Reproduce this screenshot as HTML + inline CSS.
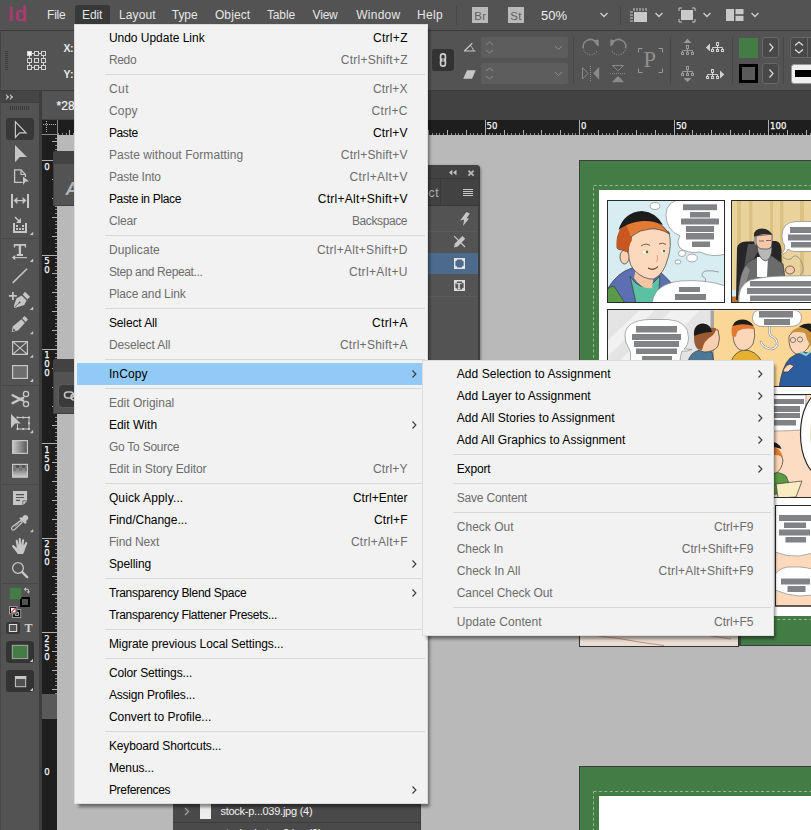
<!DOCTYPE html>
<html lang="en"><head><meta charset="utf-8"><title>InDesign - Edit menu</title>
<style>
html,body{margin:0;padding:0}
body{width:811px;height:830px;overflow:hidden;position:relative;background:#535353;font-family:'Liberation Sans',sans-serif;font-size:12px}
#app{position:absolute;left:0;top:0;width:811px;height:830px;overflow:hidden}
#app div,#app span,#app svg{position:absolute;display:block}
.t{white-space:pre;line-height:normal}
</style></head>
<body><div id="app">
<!-- s_chrome -->
<div style="left:0px;top:0px;width:811px;height:30px;background:#535353;"></div>
<div style="left:0px;top:30px;width:811px;height:1px;background:#3a3a3a;"></div>
<div style="left:0px;top:31px;width:811px;height:59px;background:#535353;"></div>
<div style="left:0px;top:90px;width:811px;height:1px;background:#3b3b3b;"></div>
<div style="left:0px;top:91px;width:811px;height:29px;background:#424242;"></div>
<span class="t" style="left:7.700px;top:2px;font-size:21px;color:#ae3a70;letter-spacing:1.400px;-webkit-text-stroke:0.700px #ae3a70;">Id</span>
<div style="left:75px;top:5px;width:35px;height:19px;background:#383838;border-radius:3px 3px 0 0;"></div>
<span class="t" style="left:47.10px;top:8px;font-size:12px;color:#e6e6e6;letter-spacing:-0.281px;">File</span>
<span class="t" style="left:82.00px;top:8px;font-size:12px;color:#e6e6e6;letter-spacing:-0.096px;">Edit</span>
<span class="t" style="left:119.00px;top:8px;font-size:12px;color:#e6e6e6;letter-spacing:0.094px;">Layout</span>
<span class="t" style="left:171.80px;top:8px;font-size:12px;color:#e6e6e6;letter-spacing:-0.072px;">Type</span>
<span class="t" style="left:214.90px;top:8px;font-size:12px;color:#e6e6e6;letter-spacing:0.122px;">Object</span>
<span class="t" style="left:266.90px;top:8px;font-size:12px;color:#e6e6e6;letter-spacing:-0.097px;">Table</span>
<span class="t" style="left:312.60px;top:8px;font-size:12px;color:#e6e6e6;letter-spacing:-0.199px;">View</span>
<span class="t" style="left:356.20px;top:8px;font-size:12px;color:#e6e6e6;letter-spacing:0.263px;">Window</span>
<span class="t" style="left:417.00px;top:8px;font-size:12px;color:#e6e6e6;letter-spacing:0.304px;">Help</span>
<div style="left:456px;top:6px;width:1px;height:19px;background:#474747;"></div>
<div style="left:472px;top:7px;width:16px;height:16px;background:#b9b9b9;"></div>
<span class="t" style="left:474.20px;top:9.5px;font-size:11.5px;color:#606060;letter-spacing:0.300px;">Br</span>
<div style="left:508px;top:7px;width:16px;height:16px;background:#b9b9b9;"></div>
<span class="t" style="left:510.20px;top:9.5px;font-size:11.5px;color:#606060;letter-spacing:0.325px;">St</span>
<span class="t" style="left:540.90px;top:8px;font-size:13px;color:#f0f0f0;letter-spacing:0.084px;">50%</span>
<svg style="left:599px;top:12px;" width="10" height="6" viewBox="0 0 10 6"><path d="M1.5 1 L5 4.5 L8.5 1" fill="none" stroke="#cfcfcf" stroke-width="1.3"/></svg>
<div style="left:620px;top:6px;width:1px;height:19px;background:#474747;"></div>
<svg style="left:629px;top:7px;" width="20" height="16" viewBox="0 0 20 16"><rect x="5" y="5" width="13" height="10" fill="#c9c9c9"/><path d="M5 1v3M8 1v3M11 1v3M14 1v3M17 1v3M1 5h3M1 8h3M1 11h3M1 14h3" stroke="#c9c9c9" stroke-width="1"/></svg>
<svg style="left:654px;top:12px;" width="10" height="6" viewBox="0 0 10 6"><path d="M1.5 1 L5 4.5 L8.5 1" fill="none" stroke="#cfcfcf" stroke-width="1.3"/></svg>
<svg style="left:678px;top:7px;" width="18" height="16" viewBox="0 0 18 16"><rect x="3" y="3" width="12" height="10" fill="#c9c9c9"/><path d="M1 4V1h3M14 1h3v3M17 12v3h-3M4 15H1v-3" fill="none" stroke="#c9c9c9" stroke-width="1"/></svg>
<svg style="left:702px;top:12px;" width="10" height="6" viewBox="0 0 10 6"><path d="M1.5 1 L5 4.5 L8.5 1" fill="none" stroke="#cfcfcf" stroke-width="1.3"/></svg>
<svg style="left:726px;top:9px;" width="18" height="12" viewBox="0 0 18 12"><rect x="0" y="0" width="8" height="12" fill="#c9c9c9"/><rect x="9.5" y="0" width="8" height="5.2" fill="#c9c9c9"/><rect x="9.5" y="6.8" width="8" height="5.2" fill="#c9c9c9"/></svg>
<svg style="left:750px;top:12px;" width="10" height="6" viewBox="0 0 10 6"><path d="M1.5 1 L5 4.5 L8.5 1" fill="none" stroke="#cfcfcf" stroke-width="1.3"/></svg>
<!-- s_canvas -->
<div style="left:42px;top:91px;width:200px;height:28px;background:#535353;"></div>
<span class="t" style="left:56.40px;top:99px;font-size:12px;color:#f4f4f4;letter-spacing:0.084px;-webkit-text-stroke:.2px #f4f4f4;">*28</span>
<div style="left:57px;top:135px;width:754px;height:695px;background:#b9b9b9;"></div>
<div style="left:42px;top:120px;width:769px;height:15px;background:#1e1e1e;"></div>
<div style="left:42px;top:135px;width:15px;height:695px;background:#1e1e1e;"></div>
<div style="left:42px;top:694px;width:15px;height:25px;background:#595959;"></div>
<div style="left:39px;top:90px;width:3px;height:740px;background:#3d3d3d;"></div>
<svg style="left:0px;top:120px;" width="811" height="15" viewBox="0 0 811 15"><path d="M69.5 10V15 M88.5 10V15 M107.5 0V15 M126.5 10V15 M145.5 10V15 M164.5 10V15 M183.5 10V15 M202.5 0V15 M220.5 10V15 M239.5 10V15 M258.5 10V15 M277.5 10V15 M296.5 0V15 M315.5 10V15 M334.5 10V15 M353.5 10V15 M372.5 10V15 M390.5 0V15 M409.5 10V15 M428.5 10V15 M447.5 10V15 M466.5 10V15 M485.5 0V15 M504.5 10V15 M523.5 10V15 M541.5 10V15 M560.5 10V15 M579.5 0V15 M598.5 10V15 M617.5 10V15 M636.5 10V15 M655.5 10V15 M674.5 0V15 M692.5 10V15 M711.5 10V15 M730.5 10V15 M749.5 10V15 M768.5 0V15 M787.5 10V15 M806.5 10V15" stroke="#b0b0b0" stroke-width="1" fill="none"/><path d="M58.5 13V15 M62.5 13V15 M66.5 13V15 M73.5 13V15 M77.5 13V15 M81.5 13V15 M85.5 13V15 M92.5 13V15 M96.5 13V15 M100.5 13V15 M103.5 13V15 M111.5 13V15 M115.5 13V15 M119.5 13V15 M122.5 13V15 M130.5 13V15 M134.5 13V15 M137.5 13V15 M141.5 13V15 M149.5 13V15 M153.5 13V15 M156.5 13V15 M160.5 13V15 M168.5 13V15 M171.5 13V15 M175.5 13V15 M179.5 13V15 M186.5 13V15 M190.5 13V15 M194.5 13V15 M198.5 13V15 M205.5 13V15 M209.5 13V15 M213.5 13V15 M217.5 13V15 M224.5 13V15 M228.5 13V15 M232.5 13V15 M236.5 13V15 M243.5 13V15 M247.5 13V15 M251.5 13V15 M254.5 13V15 M262.5 13V15 M266.5 13V15 M270.5 13V15 M273.5 13V15 M281.5 13V15 M285.5 13V15 M288.5 13V15 M292.5 13V15 M300.5 13V15 M304.5 13V15 M307.5 13V15 M311.5 13V15 M319.5 13V15 M322.5 13V15 M326.5 13V15 M330.5 13V15 M338.5 13V15 M341.5 13V15 M345.5 13V15 M349.5 13V15 M356.5 13V15 M360.5 13V15 M364.5 13V15 M368.5 13V15 M375.5 13V15 M379.5 13V15 M383.5 13V15 M387.5 13V15 M394.5 13V15 M398.5 13V15 M402.5 13V15 M405.5 13V15 M413.5 13V15 M417.5 13V15 M421.5 13V15 M424.5 13V15 M432.5 13V15 M436.5 13V15 M439.5 13V15 M443.5 13V15 M451.5 13V15 M455.5 13V15 M458.5 13V15 M462.5 13V15 M470.5 13V15 M473.5 13V15 M477.5 13V15 M481.5 13V15 M489.5 13V15 M492.5 13V15 M496.5 13V15 M500.5 13V15 M507.5 13V15 M511.5 13V15 M515.5 13V15 M519.5 13V15 M526.5 13V15 M530.5 13V15 M534.5 13V15 M538.5 13V15 M545.5 13V15 M549.5 13V15 M553.5 13V15 M557.5 13V15 M564.5 13V15 M568.5 13V15 M572.5 13V15 M575.5 13V15 M583.5 13V15 M587.5 13V15 M591.5 13V15 M594.5 13V15 M602.5 13V15 M606.5 13V15 M609.5 13V15 M613.5 13V15 M621.5 13V15 M625.5 13V15 M628.5 13V15 M632.5 13V15 M640.5 13V15 M643.5 13V15 M647.5 13V15 M651.5 13V15 M658.5 13V15 M662.5 13V15 M666.5 13V15 M670.5 13V15 M677.5 13V15 M681.5 13V15 M685.5 13V15 M689.5 13V15 M696.5 13V15 M700.5 13V15 M704.5 13V15 M708.5 13V15 M715.5 13V15 M719.5 13V15 M723.5 13V15 M726.5 13V15 M734.5 13V15 M738.5 13V15 M742.5 13V15 M745.5 13V15 M753.5 13V15 M757.5 13V15 M760.5 13V15 M764.5 13V15 M772.5 13V15 M776.5 13V15 M779.5 13V15 M783.5 13V15 M791.5 13V15 M794.5 13V15 M798.5 13V15 M802.5 13V15 M810.5 13V15" stroke="#8c8c8c" stroke-width="1" fill="none"/></svg>
<span class="t" style="left:486.50px;top:120px;font-size:9.5px;color:#f6f6f6;font-family:'DejaVu Sans Condensed',sans-serif;-webkit-text-stroke:.25px #f6f6f6;">50</span>
<span class="t" style="left:581.00px;top:120px;font-size:9.5px;color:#f6f6f6;font-family:'DejaVu Sans Condensed',sans-serif;-webkit-text-stroke:.25px #f6f6f6;">0</span>
<span class="t" style="left:675.90px;top:120px;font-size:9.5px;color:#f6f6f6;font-family:'DejaVu Sans Condensed',sans-serif;-webkit-text-stroke:.25px #f6f6f6;">50</span>
<span class="t" style="left:770.10px;top:120px;font-size:9.5px;color:#f6f6f6;font-family:'DejaVu Sans Condensed',sans-serif;-webkit-text-stroke:.25px #f6f6f6;">100</span>
<svg style="left:42px;top:120px;" width="16" height="15" viewBox="0 0 16 15"><path d="M4.500 1v12M1 4.500h13" stroke="#b4b4b4" stroke-width="1" stroke-dasharray="1 1" fill="none"/><path d="M0 14.5h16M15.5 0v15" stroke="#8a8a8a" stroke-width="1"/></svg>
<svg style="left:42px;top:135px;" width="15" height="695" viewBox="0 0 15 695"><path d="M10 6.5H15 M0 25.5H15 M10 44.5H15 M10 63.5H15 M10 82.5H15 M10 101.5H15 M0 120.5H15 M10 138.5H15 M10 157.5H15 M10 176.5H15 M10 195.5H15 M0 214.5H15 M10 233.5H15 M10 252.5H15 M10 271.5H15 M10 290.5H15 M0 308.5H15 M10 327.5H15 M10 346.5H15 M10 365.5H15 M10 384.5H15 M0 403.5H15 M10 422.5H15 M10 441.5H15 M10 459.5H15 M10 478.5H15 M0 497.5H15 M10 516.5H15 M10 535.5H15 M10 554.5H15" stroke="#b0b0b0" stroke-width="1" fill="none"/><path d="M13 3.5H15 M13 10.5H15 M13 14.5H15 M13 18.5H15 M13 21.5H15 M13 29.5H15 M13 33.5H15 M13 37.5H15 M13 40.5H15 M13 48.5H15 M13 52.5H15 M13 55.5H15 M13 59.5H15 M13 67.5H15 M13 71.5H15 M13 74.5H15 M13 78.5H15 M13 86.5H15 M13 89.5H15 M13 93.5H15 M13 97.5H15 M13 104.5H15 M13 108.5H15 M13 112.5H15 M13 116.5H15 M13 123.5H15 M13 127.5H15 M13 131.5H15 M13 135.5H15 M13 142.5H15 M13 146.5H15 M13 150.5H15 M13 154.5H15 M13 161.5H15 M13 165.5H15 M13 169.5H15 M13 172.5H15 M13 180.5H15 M13 184.5H15 M13 188.5H15 M13 191.5H15 M13 199.5H15 M13 203.5H15 M13 206.5H15 M13 210.5H15 M13 218.5H15 M13 222.5H15 M13 225.5H15 M13 229.5H15 M13 237.5H15 M13 240.5H15 M13 244.5H15 M13 248.5H15 M13 256.5H15 M13 259.5H15 M13 263.5H15 M13 267.5H15 M13 274.5H15 M13 278.5H15 M13 282.5H15 M13 286.5H15 M13 293.5H15 M13 297.5H15 M13 301.5H15 M13 305.5H15 M13 312.5H15 M13 316.5H15 M13 320.5H15 M13 324.5H15 M13 331.5H15 M13 335.5H15 M13 339.5H15 M13 342.5H15 M13 350.5H15 M13 354.5H15 M13 357.5H15 M13 361.5H15 M13 369.5H15 M13 373.5H15 M13 376.5H15 M13 380.5H15 M13 388.5H15 M13 391.5H15 M13 395.5H15 M13 399.5H15 M13 407.5H15 M13 410.5H15 M13 414.5H15 M13 418.5H15 M13 425.5H15 M13 429.5H15 M13 433.5H15 M13 437.5H15 M13 444.5H15 M13 448.5H15 M13 452.5H15 M13 456.5H15 M13 463.5H15 M13 467.5H15 M13 471.5H15 M13 475.5H15 M13 482.5H15 M13 486.5H15 M13 490.5H15 M13 493.5H15 M13 501.5H15 M13 505.5H15 M13 509.5H15 M13 512.5H15 M13 520.5H15 M13 524.5H15 M13 527.5H15 M13 531.5H15 M13 539.5H15 M13 543.5H15 M13 546.5H15 M13 550.5H15 M13 558.5H15" stroke="#8c8c8c" stroke-width="1" fill="none"/></svg>
<span class="t" style="left:44.30px;top:161px;font-size:9.5px;color:#f6f6f6;font-family:'DejaVu Sans Condensed',sans-serif;-webkit-text-stroke:.25px #f6f6f6;">0</span>
<span class="t" style="left:44.30px;top:255px;font-size:9.5px;color:#f6f6f6;font-family:'DejaVu Sans Condensed',sans-serif;-webkit-text-stroke:.25px #f6f6f6;">5</span>
<span class="t" style="left:44.30px;top:264px;font-size:9.5px;color:#f6f6f6;font-family:'DejaVu Sans Condensed',sans-serif;-webkit-text-stroke:.25px #f6f6f6;">0</span>
<span class="t" style="left:44.30px;top:349px;font-size:9.5px;color:#f6f6f6;font-family:'DejaVu Sans Condensed',sans-serif;-webkit-text-stroke:.25px #f6f6f6;">1</span>
<span class="t" style="left:44.30px;top:358px;font-size:9.5px;color:#f6f6f6;font-family:'DejaVu Sans Condensed',sans-serif;-webkit-text-stroke:.25px #f6f6f6;">0</span>
<span class="t" style="left:44.30px;top:367px;font-size:9.5px;color:#f6f6f6;font-family:'DejaVu Sans Condensed',sans-serif;-webkit-text-stroke:.25px #f6f6f6;">0</span>
<span class="t" style="left:44.30px;top:444px;font-size:9.5px;color:#f6f6f6;font-family:'DejaVu Sans Condensed',sans-serif;-webkit-text-stroke:.25px #f6f6f6;">1</span>
<span class="t" style="left:44.30px;top:453px;font-size:9.5px;color:#f6f6f6;font-family:'DejaVu Sans Condensed',sans-serif;-webkit-text-stroke:.25px #f6f6f6;">5</span>
<span class="t" style="left:44.30px;top:462px;font-size:9.5px;color:#f6f6f6;font-family:'DejaVu Sans Condensed',sans-serif;-webkit-text-stroke:.25px #f6f6f6;">0</span>
<span class="t" style="left:44.30px;top:538px;font-size:9.5px;color:#f6f6f6;font-family:'DejaVu Sans Condensed',sans-serif;-webkit-text-stroke:.25px #f6f6f6;">2</span>
<span class="t" style="left:44.30px;top:547px;font-size:9.5px;color:#f6f6f6;font-family:'DejaVu Sans Condensed',sans-serif;-webkit-text-stroke:.25px #f6f6f6;">0</span>
<span class="t" style="left:44.30px;top:556px;font-size:9.5px;color:#f6f6f6;font-family:'DejaVu Sans Condensed',sans-serif;-webkit-text-stroke:.25px #f6f6f6;">0</span>
<span class="t" style="left:44.30px;top:633px;font-size:9.5px;color:#f6f6f6;font-family:'DejaVu Sans Condensed',sans-serif;-webkit-text-stroke:.25px #f6f6f6;">2</span>
<span class="t" style="left:44.30px;top:642px;font-size:9.5px;color:#f6f6f6;font-family:'DejaVu Sans Condensed',sans-serif;-webkit-text-stroke:.25px #f6f6f6;">5</span>
<span class="t" style="left:44.30px;top:651px;font-size:9.5px;color:#f6f6f6;font-family:'DejaVu Sans Condensed',sans-serif;-webkit-text-stroke:.25px #f6f6f6;">0</span>
<span class="t" style="left:44.30px;top:766px;font-size:9.5px;color:#f6f6f6;font-family:'DejaVu Sans Condensed',sans-serif;-webkit-text-stroke:.25px #f6f6f6;">0</span>
<div style="left:579px;top:160px;width:240px;height:486px;background:#447c46;outline:1px solid #3c3c3c;outline-offset:-1px;"></div>
<div style="left:598.5px;top:190px;width:220px;height:425.5px;background:#fff;"></div>
<svg style="left:590px;top:182px;" width="221" height="445" viewBox="590 182 221 445"><rect x="593.500" y="185.500" width="230" height="434" fill="none" stroke="#93b893" stroke-width="1" stroke-dasharray="3 2.400"/></svg>
<svg style="left:598px;top:190px" width="213" height="430" viewBox="598 190 213 430"><clipPath id="p1"><rect x="608" y="201" width="116.500" height="101"/></clipPath><rect x="607.500" y="200.500" width="117" height="102" fill="#d8edf2" stroke="#2a2a2a" stroke-width="1"/><g clip-path="url(#p1)"><path d="M606 303 L608 288 Q618 272 632 268 L648 262 Q666 276 672 284 L676 303z" fill="#5d6fb3" stroke="#3a3a3a" stroke-width=".7"/><path d="M606 303 v-13 q5 -4 8 -4 l11 17z" fill="#5a9a4a" stroke="#3a3a3a" stroke-width=".7"/><path d="M630 276 Q640 292 652 284 L660 276 L658 303 L636 303z" fill="#5cc0a3" stroke="#3a3a3a" stroke-width=".7"/><path d="M636 268 L654 274 L652 288 Q642 290 634 278z" fill="#f6c6a4"/><path d="M628 234 Q626 262 634 270 Q644 280 654 279 Q664 274 668 258 Q672 246 669 232 Q650 222 628 234z" fill="#fcd9bd" stroke="#3a3a3a" stroke-width=".7"/><ellipse cx="624.500" cy="257" rx="4.500" ry="7" fill="#fbd0b0" stroke="#3a3a3a" stroke-width=".7"/><path d="M617 248 Q615 226 634 219 Q656 214 669.500 234 Q660 228 650 229 Q640 229.500 632 236 Q628 246 628 252 L622 250 Q618 250 617 248z" fill="#e27a32" stroke="#3a3a3a" stroke-width=".7"/><path d="M617 248 Q615 232 626 224 L632 240 Q628 247 628 252 L622 250z" fill="#c9571f"/><path d="M618.500 230 Q624 212 642 211 Q656 212 663 225 Q650 219 636 222 Q626 224 618.500 230z" fill="#1c1c1c"/><path d="M641 246 q5 -3.500 9 -.5M659 244 q4 -2 7 .5" fill="none" stroke="#5a3a20" stroke-width=".8"/><ellipse cx="646" cy="252" rx="3" ry="1.600" fill="#fff"/><circle cx="647" cy="252" r="1.400" fill="#4a7a3a"/><ellipse cx="663.500" cy="251" rx="2.600" ry="1.500" fill="#fff"/><circle cx="664" cy="251" r="1.300" fill="#4a7a3a"/><path d="M648 268 q5 3 10 -1.500 q-4 5 -10 1.500z" fill="#fff" stroke="#5a2a1a" stroke-width=".7"/><path d="M657 255 q1.500 5 -.5 7" fill="none" stroke="#c98a6a" stroke-width=".7"/><path d="M666 215 Q666 200 684 199 L726 199 L726 254 Q712 258 700 252 Q688 254 680 248 Q676 242 680 236 Q666 230 666 215z" fill="#fff" stroke="#8a8a8a" stroke-width=".7"/><rect x="683" y="204.3" width="34.0" height="5.9" fill="#808285"/><rect x="690" y="212" width="20.0" height="5.5" fill="#808285"/><rect x="681" y="218.5" width="38.0" height="6.0" fill="#808285"/><rect x="686" y="226" width="28.0" height="6.0" fill="#808285"/><rect x="686" y="233" width="28.0" height="6.5" fill="#808285"/><rect x="692" y="241.5" width="18.0" height="5.5" fill="#808285"/><ellipse cx="655" cy="206" rx="5" ry="3.5" fill="#fff" stroke="#8a8a8a" stroke-width=".7"/><ellipse cx="682" cy="253.5" rx="3.6" ry="3" fill="#fff" stroke="#8a8a8a" stroke-width=".7"/><ellipse cx="692" cy="258" rx="5.3" ry="4" fill="#fff" stroke="#8a8a8a" stroke-width=".7"/><ellipse cx="678" cy="262" rx="3" ry="2" fill="#fff" stroke="#8a8a8a" stroke-width=".7"/><path d="M652 304 Q654 284 680 281 Q705 279 726 286 L726 304z" fill="#fff" stroke="#8a8a8a" stroke-width=".7"/><path d="M705 282 q2 -4 -2 -5 q-3 -3 2 -6 q6 -1 14 1" fill="none" stroke="#8a8a8a" stroke-width=".8"/><rect x="679" y="287" width="21.0" height="5.0" fill="#808285"/><rect x="675" y="294" width="31.0" height="6.0" fill="#808285"/></g><rect x="607.500" y="200.500" width="117" height="102" fill="none" stroke="#2a2a2a" stroke-width="1"/><clipPath id="p2"><rect x="732" y="201" width="90" height="101"/></clipPath><rect x="731.500" y="200.500" width="90" height="102" fill="#ead29c" stroke="#2a2a2a" stroke-width="1"/><g clip-path="url(#p2)"><rect x="737" y="201" width="4" height="101" fill="#dcc184"/><rect x="749" y="201" width="3.5" height="101" fill="#dcc184"/><rect x="770" y="201" width="3" height="101" fill="#dcc184"/><rect x="780" y="201" width="3.5" height="101" fill="#dcc184"/><rect x="800" y="201" width="4" height="101" fill="#dcc184"/><rect x="732" y="290" width="6" height="7" fill="#d8ecf2"/><rect x="732" y="296.500" width="12" height="6" fill="#c9702f"/><path d="M736 300 L737 248 Q738 242 746 241.500 L776 241 Q781 242 781.500 250 L782 300z" fill="#262626"/><path d="M748 244 L762 244 L752 262 L744 268z" fill="#555"/><path d="M738 302 Q738 272 748 262 L760 256 L772 256 L783 264 Q786 280 785 302z" fill="#6b6b6b" stroke="#3a3a3a" stroke-width=".7"/><path d="M757 257 L768 257 L767 277 L757 277z" fill="#fff"/><path d="M738 302 Q739 276 746 266 L750 270 Q744 284 745 302z" fill="#8a8a8a"/><path d="M756 236 Q756 248 760 252 L770 252 Q773 244 772 234z" fill="#f6c9aa" stroke="#3a3a3a" stroke-width=".7"/><path d="M754 237 Q753 229 762 228.500 Q770 229 772 235 Q764 232 754 237z" fill="#2a2a2a"/><path d="M754 237 q-1 4 1 8 l2 -1 l0 -8z" fill="#9a9a9a"/><path d="M757 246 Q758 258 765 261 Q772 260 772 247 Q768 250 764 249 Q760 250 757 246z" fill="#b8b8b8" stroke="#3a3a3a" stroke-width=".7"/><path d="M759 241 h5 M766 240.500 h5" stroke="#555" stroke-width=".8"/><ellipse cx="790" cy="270" rx="4.500" ry="4" fill="#f6c9aa" stroke="#3a3a3a" stroke-width=".7"/><path d="M782 236 Q782 222 796 221.500 L822 221.500 L822 251.500 L794 251.500 Q790 251 788 249 Q786 254 781 254 Q786 250 784.500 245 Q782 242 782 236z" fill="#fff" stroke="#8a8a8a" stroke-width=".7"/><rect x="790" y="227" width="32.0" height="6.0" fill="#808285"/><rect x="788" y="234.5" width="34.0" height="6.0" fill="#808285"/><rect x="791" y="242" width="31.0" height="5.5" fill="#808285"/><path d="M783 257 q4 4 8 2 q3 -5 7 -2 q6 6 5 14 q-1 3 -3 4" fill="none" stroke="#8a8a8a" stroke-width=".8"/><path d="M739 304 Q737 286 750 280 Q768 275.500 790 276 L822 275.500 L822 304z" fill="#fff" stroke="#8a8a8a" stroke-width=".7"/><rect x="750" y="281" width="72.0" height="5.5" fill="#808285"/><rect x="747" y="288" width="75.0" height="6.0" fill="#808285"/><rect x="750" y="295.5" width="72.0" height="5.5" fill="#808285"/></g><rect x="731.500" y="200.500" width="90" height="102" fill="none" stroke="#2a2a2a" stroke-width="1"/><clipPath id="p3"><rect x="608" y="310.500" width="214" height="75.500"/></clipPath><rect x="607.500" y="309.500" width="214" height="77" fill="#e4e4e4" stroke="#2a2a2a" stroke-width="1"/><g clip-path="url(#p3)"><path d="M608 340 L640 310 L655 310 L608 356z M608 372 L672 310 L700 310 L626 386 L608 386z" fill="#f1f1f1"/><rect x="714" y="310" width="110" height="77" fill="#fad796"/><rect x="710.500" y="310" width="3.500" height="77" fill="#a6a6a6"/><path d="M625 336 Q625 320 650 319.500 L668 319.500 Q689 321 688.500 338 Q688 346 684 349 L692 349.500 Q686 352 682 351 Q680 356 680 362 L630 362 Q632 352 628 347 Q625 342 625 336z" fill="#fff" stroke="#8a8a8a" stroke-width=".7"/><rect x="636" y="326" width="41.0" height="6.5" fill="#808285"/><rect x="632" y="334" width="49.0" height="6.0" fill="#808285"/><rect x="634" y="341" width="45.0" height="6.0" fill="#808285"/><rect x="636" y="348.5" width="41.0" height="5.5" fill="#808285"/><rect x="642" y="356" width="30.0" height="5.0" fill="#808285"/><path d="M688 362 Q690 352 700 350 L712 352 L714 362z" fill="#4d7796" stroke="#3a3a3a" stroke-width=".7"/><path d="M695 338 Q694 350 704 352 Q714 352 718 346 Q721 338 718 330 Q706 326 695 338z" fill="#f8cfae" stroke="#3a3a3a" stroke-width=".7"/><path d="M694 336 Q694 350 702 350 Q704 340 712 336 Q716 332 716 328 Q704 326 694 336z" fill="#9a5a32"/><path d="M694 336 Q693 324 703 323.500 Q711 324 712 332 Q704 332 694 336z" fill="#1c1c1c"/><path d="M731 362 Q734 352 744 350 Q756 350 762 362z" fill="#e6b030" stroke="#3a3a3a" stroke-width=".7"/><path d="M733 334 Q733 346 740 350 Q748 352 753 344 Q756 336 754 328 Q742 324 733 334z" fill="#fbd6b8" stroke="#3a3a3a" stroke-width=".7"/><path d="M732 336 Q730.500 328 733 325 Q744 322 753.500 325.500 L754 329 Q744 327.500 738 331 Q736 334 736 337z" fill="#e27a32"/><path d="M732.500 326 Q735 319 743 319.500 Q750 320 753.500 326 Q743 322.500 732.500 326z" fill="#1c1c1c"/><path d="M779 388 Q782 366 790 358 L800 352 L822 354 L822 388z" fill="#2c5d9e" stroke="#3a3a3a" stroke-width=".7"/><path d="M789 336 Q788 350 796 354 Q806 354 810 344 Q811 336 808 328 Q796 326 789 336z" fill="#fbd6b8" stroke="#3a3a3a" stroke-width=".7"/><path d="M790 333 Q798 324 812 327 L812 348 Q807 342 805 333 Q797 331 790 333z" fill="#c8923a"/><path d="M799 326.500 Q805 322.500 812 324 L812 333 Q806 328 799 326.500z" fill="#1c1c1c"/><circle cx="793" cy="340" r="2.600" fill="none" stroke="#555" stroke-width=".7"/><circle cx="800" cy="339.500" r="2.600" fill="none" stroke="#555" stroke-width=".7"/><path d="M783 372 Q784 366 790 364 L794 366 L788 372z" fill="#fbd6b8" stroke="#3a3a3a" stroke-width=".7"/><path d="M800 352 l6 3 l5 -4" fill="none" stroke="#8fd0d0" stroke-width="2"/><path d="M769.500 326 Q768.500 333 771 336 Q778 339 777 345 Q774 351 767 348 Q762 346 761 342" fill="none" stroke="#8f8f8f" stroke-width="2.400" stroke-linecap="round"/><path d="M769.500 326 Q768.500 333 771 336 Q778 339 777 345 Q774 351 767 348 Q762 346 761 342" fill="none" stroke="#fff" stroke-width="1.100" stroke-linecap="round"/><path d="M752.500 318 Q752.500 309.500 762 309.500 L792 309.500 Q801.500 310 801.500 318 Q801 326.500 790 326.500 L762 326.500 Q752.500 326 752.500 318z" fill="#fff" stroke="#8a8a8a" stroke-width=".7"/><rect x="759" y="311" width="34.0" height="6.5" fill="#808285"/><rect x="764" y="319" width="26.0" height="6.0" fill="#808285"/></g><rect x="607.500" y="309.500" width="214" height="77" fill="none" stroke="#2a2a2a" stroke-width="1"/><clipPath id="p4"><rect x="608" y="395" width="214" height="102"/></clipPath><rect x="607.500" y="394.500" width="214" height="103" fill="#fcdcc2" stroke="#2a2a2a" stroke-width="1"/><g clip-path="url(#p4)"><path d="M740 395 L806 395 Q806 420 800 430 Q780 432 740 430z" fill="#fff" stroke="#8a8a8a" stroke-width=".7"/><rect x="760" y="399" width="44.0" height="5.0" fill="#808285"/><rect x="760" y="406" width="40.0" height="6.0" fill="#808285"/><rect x="760" y="413" width="40.0" height="5.0" fill="#808285"/><rect x="760" y="420" width="36.0" height="5.5" fill="#808285"/><ellipse cx="822" cy="434" rx="21.500" ry="42" fill="#fff" stroke="#2a2a2a" stroke-width="1.200"/><ellipse cx="822" cy="434" rx="12" ry="30" fill="#f2e6b0"/><path d="M768 474 Q778 470 786 476 L792 490 L768 496z" fill="#5c9a42" stroke="#3a3a3a" stroke-width=".7"/><path d="M768 448 Q780 448 783 460 Q782 470 776 473 L768 473z" fill="#fbd6b8" stroke="#3a3a3a" stroke-width=".7"/><path d="M768 446 Q780 446 783 457 Q776 454 768 455z" fill="#e27a32"/><path d="M768 441 Q779 441.500 781.500 449 Q775 446.500 768 447z" fill="#1c1c1c"/><path d="M776 484 L802 481 L796 497 L778 498z" fill="#f8ecc0" stroke="#3a3a3a" stroke-width=".7"/></g><rect x="607.500" y="394.500" width="214" height="103" fill="none" stroke="#2a2a2a" stroke-width="1"/><clipPath id="p5"><rect x="775.500" y="506" width="60" height="100"/></clipPath><rect x="775.500" y="505.500" width="60" height="100.500" fill="#fcd9ba" stroke="#2a2a2a" stroke-width="1"/><g clip-path="url(#p5)"><path d="M775 505 L822 505 L822 548 Q800 562 775 552z" fill="#fff" stroke="#8a8a8a" stroke-width=".7"/><rect x="779" y="515" width="43.0" height="6.0" fill="#808285"/><rect x="784" y="522.5" width="22.0" height="5.5" fill="#808285"/><rect x="779" y="529.5" width="31.0" height="6.0" fill="#808285"/><rect x="785.5" y="537" width="20.5" height="5.5" fill="#808285"/><path d="M775 574 Q782 566 792 567 Q806 566 822 572 L822 592 Q800 601 775 590z" fill="#fff" stroke="#8a8a8a" stroke-width=".7"/><rect x="781" y="578.5" width="29.0" height="6.0" fill="#808285"/><rect x="787.5" y="586" width="18.0" height="6.0" fill="#808285"/></g><rect x="775.500" y="505.500" width="60" height="100.500" fill="none" stroke="#2a2a2a" stroke-width="1"/></svg>
<div style="left:579px;top:600px;width:160px;height:47px;background:#ecddd2;outline:1px solid #333;outline-offset:-1px;"></div>
<div style="left:739px;top:600px;width:2px;height:46px;background:#3a463a;"></div>
<svg style="left:579px;top:630px;" width="160" height="17" viewBox="0 0 160 17"><path d="M16 5.500 Q40 8 60 12 L85 15.500 M130 5.500 L152 9" fill="none" stroke="#b08468" stroke-width=".8"/></svg>
<div style="left:579px;top:766px;width:240px;height:70px;background:#447c46;outline:1px solid #3c3c3c;outline-offset:-1px;"></div>
<div style="left:598.5px;top:796px;width:220px;height:40px;background:#fff;"></div>
<svg style="left:590px;top:788px;" width="221" height="42" viewBox="590 788 221 42"><rect x="593.500" y="791.500" width="230" height="60" fill="none" stroke="#93b893" stroke-width="1" stroke-dasharray="3 2.400"/></svg>
<!-- s_tools -->
<div style="left:0px;top:90px;width:39px;height:740px;background:#535353;"></div>
<div style="left:0px;top:90px;width:1px;height:740px;background:#484848;"></div>
<div style="left:0px;top:90px;width:39px;height:1px;background:#3d3d3d;"></div>
<div style="left:1px;top:91px;width:38px;height:11px;background:#454545;"></div>
<div style="left:1px;top:102px;width:38px;height:1px;background:#3f3f3f;"></div>
<div style="left:2px;top:238px;width:36px;height:1px;background:#484848;"></div>
<div style="left:2px;top:385px;width:36px;height:1px;background:#484848;"></div>
<div style="left:2px;top:484px;width:36px;height:1px;background:#484848;"></div>
<div style="left:2px;top:583px;width:36px;height:1px;background:#484848;"></div>
<div style="left:6px;top:118px;width:28px;height:22px;background:#383838;border-radius:3px;"></div>
<div style="left:6px;top:622px;width:14px;height:12px;background:#383838;border-radius:2.500px;"></div>
<div style="left:6px;top:641px;width:28px;height:22px;background:#333;border-radius:3px;"></div>
<div style="left:6px;top:670px;width:28px;height:22px;background:#333;border-radius:3px;"></div>
<svg style="left:0px;top:90px;" width="40" height="740" viewBox="0 90 40 740"><path d="M6 94.500L9 97 6 99.500 7.200 97zM10 94.500L13 97 10 99.500 11.200 97z" fill="#c6c6c6" stroke="#c6c6c6" stroke-width=".5" stroke-linejoin="round"/><path d="M10.5 106v4 M12.5 106v4 M14.5 106v4 M16.5 106v4 M18.5 106v4 M20.5 106v4 M22.5 106v4 M24.5 106v4 M26.5 106v4 M28.5 106v4" stroke="#3a3a3a" stroke-width="1"/><path d="M15.400 121.800V137.400L19.600 132.800H26z" fill="none" stroke="#c6c6c6" stroke-width="1.200"/><path d="M15 145V162.300L19.800 157H27z" fill="#c6c6c6"/><path d="M22.500 182.400H14.600V169.800H21L25.400 174.500V177" fill="none" stroke="#c6c6c6" stroke-width="1.300"/><path d="M21 169.800V174.500H25.400" fill="none" stroke="#c6c6c6" stroke-width="1.200"/><path d="M23 176.500L29.200 181.400H25.600L23 185z" fill="#c6c6c6"/><path d="M12 194v14.100M28 194v14.100" stroke="#c6c6c6" stroke-width="2"/><path d="M16 200.600h8" stroke="#c6c6c6" stroke-width="1.200"/><path d="M13.600 200.600l3.800-3.600v7.200zM26.400 200.600l-3.800-3.600v7.200z" fill="#c6c6c6"/><path d="M14 223v9h12v-9" fill="none" stroke="#c6c6c6" stroke-width="2"/><path d="M16 225h2v2h-2zM22 225h2v2h-2zM16 228h2v2h-2zM19 228h2v2h-2zM22 228h2v2h-2z" fill="#c6c6c6"/><path d="M15 217l4.500 4.500" stroke="#c6c6c6" stroke-width="1.500"/><path d="M21 218v5h-5z" fill="#c6c6c6"/><path d="M33.200 231.7V235.1H29.800z" fill="#c6c6c6"/><path d="M13.800 244h12.300v3.500h-1.400v-1.700h-3.600v8.200h1.900v2h-6.200v-2h1.900v-8.200h-3.500v1.700h-1.400z" fill="#c6c6c6"/><path d="M14 257.600h13" stroke="#c6c6c6" stroke-width="1.100"/><path d="M11.800 257.600l3.400-2.700v5.400z" fill="#c6c6c6"/><path d="M33.200 258.6V262H29.800z" fill="#c6c6c6"/><path d="M12.700 282.900L27.100 268.700" stroke="#c6c6c6" stroke-width="1.600"/><path d="M8.900 295.800h7.900M12.900 292v8" stroke="#c6c6c6" stroke-width="1.700"/><path d="M22.700 294.500L25 291.800 30 296.700 27.400 299.400z" fill="#c6c6c6"/><path d="M21.600 295.600L26.600 300.500L24.300 305.100L14.700 308.100L13.800 306L16.400 298.400z" fill="#c6c6c6"/><path d="M14.800 307l4.600-4.400" stroke="#535353" stroke-width=".8"/><circle cx="19.600" cy="302.400" r=".9" fill="#535353"/><path d="M33.200 306.6V310H29.800z" fill="#c6c6c6"/><path d="M22.200 318.300L24.600 316 28 319.500 25.600 321.900z" fill="#c6c6c6"/><path d="M21.400 319.300L24.900 322.900L17.900 330.600L11.800 332L12.700 326.500z" fill="#c6c6c6"/><path d="M13.500 328.200l2.200 2.200-2.800.8z" fill="#535353"/><path d="M33.200 330.90000000000003V334.3H29.800z" fill="#c6c6c6"/><path d="M12.600 341.600h14.800v12.800h-14.800zM12.600 341.600l14.800 12.800M27.400 341.600l-14.800 12.800" fill="none" stroke="#c6c6c6" stroke-width="1.200"/><path d="M33.200 354.40000000000003V357.8H29.800z" fill="#c6c6c6"/><rect x="12.600" y="365.600" width="14.800" height="12.800" fill="#6e6e6e" stroke="#c6c6c6" stroke-width="1.200"/><path d="M33.200 378.6V382H29.800z" fill="#c6c6c6"/><circle cx="26" cy="394" r="2.600" fill="none" stroke="#c6c6c6" stroke-width="1.300"/><circle cx="26" cy="404.100" r="2.600" fill="none" stroke="#c6c6c6" stroke-width="1.300"/><path d="M12.600 395.200L23.200 400.600M12.600 403.100L23.200 397.700" stroke="#c6c6c6" stroke-width="2.400" stroke-linecap="round"/><path d="M11 414.100V428.300L15.200 423.400H20.800z" fill="#c6c6c6"/><path d="M17.500 417.500H29V429H17.500V424" fill="none" stroke="#c6c6c6" stroke-width="1"/><path d="M16.500 416.500h2v2h-2zM22.200 416.500h2v2h-2zM28 416.500h2v2h-2zM28 422.200h2v2h-2zM28 428h2v2h-2zM22.200 428h2v2h-2zM16.500 428h2v2h-2z" fill="#c6c6c6"/><path d="M33.200 429.8V433.2H29.800z" fill="#c6c6c6"/><defs><linearGradient id="gs" x1="0" y1="0" x2="1" y2="0"><stop offset="0" stop-color="#cacaca"/><stop offset="1" stop-color="#565656"/></linearGradient><linearGradient id="gf" x1="0" y1="0" x2="0" y2="1"><stop offset="0" stop-color="#6a6a6a"/><stop offset=".5" stop-color="#8e8e8e"/><stop offset="1" stop-color="#cdcdcd"/></linearGradient></defs><rect x="12.600" y="440.600" width="14.800" height="12.800" fill="url(#gs)" stroke="#c6c6c6" stroke-width="1.200"/><rect x="12.600" y="464.400" width="14.800" height="12.800" fill="url(#gf)" stroke="#c6c6c6" stroke-width="1.200"/><path d="M16 465h3v3h-3zM22 465h3v3h-3z" fill="#4e4e4e" opacity=".8"/><path d="M13 468h3v3h-3zM19 468h3v3h-3zM25 468h2v3h-2z" fill="#6a6a6a" opacity=".6"/><path d="M13 491h14.100v9.500h-4.600v4.500H13z" fill="#c6c6c6"/><path d="M23.200 505v-3.800h3.900z" fill="#c6c6c6"/><path d="M16 494.600h8M16 497.500h8M16 500.400h4" stroke="#535353" stroke-width="1.100"/><path d="M20.600 520.600l1.600 1.600-7.600 7.400q-1.600 1-2.600 0q-1-1.100 0-2.600z" fill="none" stroke="#c6c6c6" stroke-width="1.200" stroke-linejoin="round"/><path d="M19.200 518.600l1.700-1.500 1.200 1 .9-1.900a2.800 2.800 0 0 1 4.600 3.400l-1.700 1.600.9 1.200-1.600 1.600z" fill="#c6c6c6"/><path d="M15.200 526.400l3.800-3.800" stroke="#c6c6c6" stroke-width="1.200" stroke-dasharray=".7 .5"/><path d="M33.200 528.9V532.3H29.800z" fill="#c6c6c6"/><path d="M17.800 554q-2.400-3.400-5.400-7.100c-.9-1.200.6-2.400 1.700-1.500l2.800 2.600l-1.200-6.900c-.2-1.400 1.600-1.800 2-.4l1.200 4.600l-.2-6.300c0-1.400 2-1.400 2.100 0l.3 6.200l1-5.100c.3-1.300 2.100-1 2 .3l-.6 5.700l1.900-3.600c.6-1.100 2.200-.3 1.800.9l-2.300 6.200q-.6 2.800-1.900 4.400z" fill="#c6c6c6"/><circle cx="18" cy="568" r="5.400" fill="none" stroke="#c6c6c6" stroke-width="1.300"/><path d="M22.200 572.200l5 5" stroke="#c6c6c6" stroke-width="2.400" stroke-linecap="round"/><rect x="21" y="598" width="8" height="8" fill="#535353" stroke="#000" stroke-width="2"/><rect x="9.800" y="587.800" width="11.500" height="11.400" fill="#447c46"/><path d="M25.500 589.300h2.900v2.800" fill="none" stroke="#c6c6c6" stroke-width="1"/><path d="M23.800 589.300l2.200-2v4zM28.400 593.600l-2-2.200h4z" fill="#c6c6c6"/><rect x="12.500" y="609.500" width="8.300" height="8" fill="#111" stroke="#9a9a9a" stroke-width="1"/><rect x="15.500" y="612.500" width="3" height="3" fill="none" stroke="#cfcfcf" stroke-width=".8"/><rect x="9.500" y="606.600" width="7.400" height="7.200" fill="#111" stroke="#9a9a9a" stroke-width="1"/><rect x="11" y="608" width="4.600" height="4.600" fill="#fff"/><path d="M11.200 612.400L15.400 608.200" stroke="#e8202a" stroke-width="1.200"/><rect x="9.400" y="624.500" width="7.300" height="7" fill="#555" stroke="#e0e0e0" stroke-width="1"/><rect x="12.300" y="645.300" width="15.400" height="13.300" fill="#447c46" stroke="#a8a8a8" stroke-width="1"/><path d="M33 658.800V662H29.800z" fill="#c6c6c6"/><rect x="15.400" y="676.500" width="10.300" height="10.200" fill="#505050" stroke="#c6c6c6" stroke-width="1"/><rect x="15" y="676" width="11.200" height="3" fill="#c6c6c6"/><path d="M33 687.800V691H29.800z" fill="#c6c6c6"/></svg>
<span class="t" style="left:24.60px;top:621px;font-size:12px;color:#d4d4d4;font-weight:700;font-family:'Liberation Serif',serif;">T</span>
<!-- s_control -->
<div style="left:0px;top:30px;width:1px;height:60px;background:#444;"></div>
<svg style="left:5px;top:51px;" width="3" height="20" viewBox="0 0 3 20"><path d="M0 .5h3M0 2.500h3M0 4.500h3M0 6.500h3M0 8.500h3M0 10.500h3M0 12.500h3M0 14.500h3M0 16.500h3M0 18.500h3" stroke="#3c3c3c" stroke-width="1"/></svg>
<svg style="left:27px;top:51px;" width="20" height="20" viewBox="0 0 20 20"><rect x="0.5" y="0.5" width="4" height="4" fill="#fff" stroke="#d2d2d2" stroke-width="1"/><rect x="7.5" y="0.5" width="4" height="4" fill="none" stroke="#d2d2d2" stroke-width="1"/><rect x="14.5" y="0.5" width="4" height="4" fill="none" stroke="#d2d2d2" stroke-width="1"/><rect x="0.5" y="7.5" width="4" height="4" fill="none" stroke="#d2d2d2" stroke-width="1"/><rect x="7.5" y="7.5" width="4" height="4" fill="none" stroke="#d2d2d2" stroke-width="1"/><rect x="14.5" y="7.5" width="4" height="4" fill="none" stroke="#d2d2d2" stroke-width="1"/><rect x="0.5" y="14.5" width="4" height="4" fill="none" stroke="#d2d2d2" stroke-width="1"/><rect x="7.5" y="14.5" width="4" height="4" fill="none" stroke="#d2d2d2" stroke-width="1"/><rect x="14.5" y="14.5" width="4" height="4" fill="none" stroke="#d2d2d2" stroke-width="1"/><path d="M5 2.500h2M12 2.500h2M5 16.500h2M12 16.500h2M2.500 5v2M2.500 12v2M16.500 5v2M16.500 12v2" stroke="#d2d2d2" stroke-width="1"/></svg>
<span class="t" style="left:63.60px;top:42px;font-size:10.5px;color:#e8e8e8;letter-spacing:-0.500px;font-weight:700;">X:</span>
<span class="t" style="left:63.60px;top:68px;font-size:10.5px;color:#e8e8e8;letter-spacing:0.266px;font-weight:700;">Y:</span>
<div style="left:432px;top:49px;width:22px;height:22px;background:#333;border-radius:3px;"></div>
<svg style="left:436px;top:50px;" width="14" height="20" viewBox="436 50 14 20"><rect x="440.600" y="53.800" width="4.800" height="7" rx="2.400" fill="none" stroke="#d0d0d0" stroke-width="1.700"/><rect x="440.600" y="59.200" width="4.800" height="7" rx="2.400" fill="none" stroke="#d0d0d0" stroke-width="1.700"/><path d="M443 58.500v3" stroke="#333" stroke-width="1"/></svg>
<svg style="left:462px;top:40px;" width="16" height="14" viewBox="462 40 16 14"><path d="M464 51H475.500M464.600 50.800L472.300 43.300" fill="none" stroke="#c6c6c6" stroke-width="1.200"/><path d="M470.200 45.600A7.500 7.500 0 0 1 473.600 51" fill="none" stroke="#c6c6c6" stroke-width="1"/></svg>
<svg style="left:463px;top:69px;" width="13" height="11" viewBox="0 0 13 11"><path d="M4 1.200h8.800l-3.800 8.600h-8.800z" fill="#c6c6c6"/></svg>
<div style="left:481px;top:37px;width:87px;height:21px;background:#5d5d5d;border-radius:2px;"></div>
<svg style="left:485px;top:40px;" width="9" height="15" viewBox="0 0 9 15"><path d="M1 5l3.500-3 3.500 3M1 10l3.500 3 3.500-3" fill="none" stroke="#8a8a8a" stroke-width="1"/></svg>
<svg style="left:554px;top:45px;" width="9" height="6" viewBox="0 0 9 6"><path d="M1 1l3.500 3.500 3.500-3.500" fill="none" stroke="#8a8a8a" stroke-width="1"/></svg>
<div style="left:481px;top:63px;width:87px;height:21px;background:#5d5d5d;border-radius:2px;"></div>
<svg style="left:485px;top:66px;" width="9" height="15" viewBox="0 0 9 15"><path d="M1 5l3.500-3 3.500 3M1 10l3.500 3 3.500-3" fill="none" stroke="#8a8a8a" stroke-width="1"/></svg>
<svg style="left:554px;top:71px;" width="9" height="6" viewBox="0 0 9 6"><path d="M1 1l3.500 3.500 3.500-3.500" fill="none" stroke="#8a8a8a" stroke-width="1"/></svg>
<div style="left:573px;top:37px;width:1px;height:47px;background:#474747;"></div>
<svg style="left:580px;top:36px;" width="22" height="22" viewBox="0 0 22 22"><path d="M3.400 12.500A7.200 7.200 0 0 1 15.800 6" fill="none" stroke="#8a8a8a" stroke-width="1.500"/><path d="M13.600 4.200L18.600 3.600L18.800 10.200L16.600 9.400z" fill="#8a8a8a"/><path d="M3.800 14A7.200 7.200 0 0 0 17.400 14" fill="none" stroke="#8a8a8a" stroke-width="1.200" stroke-dasharray="1 1.500"/></svg>
<svg style="left:607px;top:36px;" width="22" height="22" viewBox="0 0 22 22"><path d="M18.600 12.500A7.200 7.200 0 0 0 6.200 6" fill="none" stroke="#8a8a8a" stroke-width="1.500"/><path d="M8.400 4.200L3.400 3.600L3.200 10.200L5.400 9.400z" fill="#8a8a8a"/><path d="M18.200 14A7.200 7.200 0 0 1 4.600 14" fill="none" stroke="#8a8a8a" stroke-width="1.200" stroke-dasharray="1 1.500"/></svg>
<svg style="left:581px;top:65px;" width="20" height="18" viewBox="0 0 20 18"><path d="M1.500 2.600v11.400l5.600-5.700z" fill="none" stroke="#8a8a8a" stroke-width="1"/><path d="M18.200 2.100v12.400l-6.200-6.200z" fill="#8a8a8a"/><path d="M9.500 1v15.500" stroke="#8a8a8a" stroke-width="1" stroke-dasharray="1 1"/></svg>
<svg style="left:609px;top:64px;" width="18" height="20" viewBox="0 0 18 20"><path d="M3.600 1.500h10.800l-5.400 5.400z" fill="none" stroke="#8a8a8a" stroke-width="1"/><path d="M2.800 18.200h12.400l-6.200-6.200z" fill="#8a8a8a"/><path d="M1 9.600h16" stroke="#8a8a8a" stroke-width="1" stroke-dasharray="1 1"/></svg>
<svg style="left:637px;top:47px;" width="27" height="27" viewBox="0 0 27 27"><path d="M1.500 5.500V1.500h4M21.500 1.500h4v4M25.500 21.500v4h-4M5.500 25.500h-4v-4" fill="none" stroke="#9a9a9a" stroke-width="1"/></svg>
<span class="t" style="left:643.40px;top:47px;font-size:22.5px;color:#8f8f8f;font-family:'Liberation Serif',serif;">P</span>
<div style="left:670px;top:37px;width:1px;height:47px;background:#474747;"></div>
<svg style="left:676px;top:34px;" width="58" height="54" viewBox="676 34 58 54"><rect x="686.5" y="45.5" width="2" height="3" fill="none" stroke="#9a9a9a"/><rect x="681.5" y="52.5" width="2" height="2" fill="none" stroke="#9a9a9a"/><rect x="686.5" y="52.5" width="2" height="2" fill="none" stroke="#9a9a9a"/><rect x="691.5" y="52.5" width="2" height="2" fill="none" stroke="#9a9a9a"/><path d="M687.5 49V52M682.5 52V50.5H692.5V52" fill="none" stroke="#9a9a9a"/><path d="M683.600 43L687.500 38.800 691.400 43z" fill="#9a9a9a"/><rect x="716.5" y="42.5" width="2" height="3" fill="none" stroke="#d2d2d2"/><rect x="711.5" y="49.5" width="2" height="2" fill="none" stroke="#d2d2d2"/><rect x="716.5" y="49.5" width="2" height="2" fill="none" stroke="#d2d2d2"/><rect x="721.5" y="49.5" width="2" height="2" fill="none" stroke="#d2d2d2"/><path d="M717.5 46V49M712.5 49V47.5H722.5V49" fill="none" stroke="#d2d2d2"/><path d="M710 43.600V51.400L705.800 47.500z" fill="#d2d2d2"/><rect x="686.5" y="66.5" width="2" height="3" fill="none" stroke="#9a9a9a"/><rect x="681.5" y="73.5" width="2" height="2" fill="none" stroke="#9a9a9a"/><rect x="686.5" y="73.5" width="2" height="2" fill="none" stroke="#9a9a9a"/><rect x="691.5" y="73.5" width="2" height="2" fill="none" stroke="#9a9a9a"/><path d="M687.5 70V73M682.5 73V71.5H692.5V73" fill="none" stroke="#9a9a9a"/><path d="M683.600 78H691.400L687.500 82.100z" fill="#9a9a9a"/><rect x="711.5" y="69.5" width="2" height="3" fill="none" stroke="#d2d2d2"/><rect x="706.5" y="76.5" width="2" height="2" fill="none" stroke="#d2d2d2"/><rect x="711.5" y="76.5" width="2" height="2" fill="none" stroke="#d2d2d2"/><rect x="716.5" y="76.5" width="2" height="2" fill="none" stroke="#d2d2d2"/><path d="M712.5 73V76M707.5 76V74.5H717.5V76" fill="none" stroke="#d2d2d2"/><path d="M720 70.600L724.300 74.500 720 78.400z" fill="#d2d2d2"/></svg>
<div style="left:732px;top:37px;width:1px;height:47px;background:#474747;"></div>
<div style="left:739px;top:38px;width:19px;height:19.5px;background:#447c46;"></div>
<div style="left:739px;top:63.5px;width:19px;height:19.5px;background:#5a5a5a;border:3px solid #000;box-sizing:border-box;"></div>
<div style="left:762px;top:37px;width:17px;height:21px;background:#484848;border:1px solid #686868;box-sizing:border-box;border-radius:3px;"></div>
<svg style="left:767px;top:42px;" width="8" height="11" viewBox="0 0 8 11"><path d="M2.500 1.500l3.500 4-3.500 4" fill="none" stroke="#e0e0e0" stroke-width="1.150"/></svg>
<div style="left:762px;top:63px;width:17px;height:21px;background:#484848;border:1px solid #686868;box-sizing:border-box;border-radius:3px;"></div>
<svg style="left:767px;top:68px;" width="8" height="11" viewBox="0 0 8 11"><path d="M2.500 1.500l3.500 4-3.500 4" fill="none" stroke="#e0e0e0" stroke-width="1.150"/></svg>
<div style="left:783px;top:37px;width:1px;height:47px;background:#474747;"></div>
<div style="left:790px;top:37px;width:26px;height:21px;background:#484848;border:1px solid #686868;box-sizing:border-box;border-radius:3px;"></div>
<svg style="left:794px;top:40px;" width="10" height="15" viewBox="0 0 10 15"><path d="M1 5.500l4-3.500 4 3.500M1 9.500l4 3.500 4-3.500" fill="none" stroke="#e0e0e0" stroke-width="1.200"/></svg>
<div style="left:807px;top:37px;width:1px;height:21px;background:#686868;"></div>
<div style="left:790.5px;top:63.5px;width:26px;height:20px;background:#f0f0f0;border:1px solid #9a9a9a;box-sizing:border-box;border-radius:3px;"></div>
<div style="left:795px;top:70px;width:20px;height:7px;background:#000;"></div>
<!-- s_panels -->
<div style="left:53px;top:151px;width:60px;height:55px;background:#535353;border-radius:3px 0 0 0;outline:1px solid #3f3f3f;outline-offset:-1px;"></div>
<div style="left:53px;top:151px;width:60px;height:13px;background:#424242;border-radius:3px 0 0 0;"></div>
<span class="t" style="left:65.40px;top:178.5px;font-size:18px;color:#b4b4b4;font-weight:700;font-style:italic;">A</span>
<div style="left:53px;top:359px;width:60px;height:55px;background:#535353;border-radius:3px 0 0 0;outline:1px solid #3f3f3f;outline-offset:-1px;"></div>
<div style="left:53px;top:359px;width:60px;height:13px;background:#424242;border-radius:3px 0 0 0;"></div>
<div style="left:59px;top:385px;width:40px;height:22px;background:#3a3a3a;border-radius:3px;outline:1px solid #5a5a5a;"></div>
<svg style="left:63px;top:390px;" width="16" height="12" viewBox="0 0 16 12"><rect x="1.500" y="2" width="9" height="6" rx="3" fill="none" stroke="#c6c6c6" stroke-width="1.600"/><rect x="8" y="4" width="9" height="6" rx="3" fill="none" stroke="#c6c6c6" stroke-width="1.600"/></svg>
<div style="left:400px;top:165px;width:80px;height:250px;background:#535353;border-radius:0 4px 0 0;box-shadow:1px 1px 3px rgba(0,0,0,.35);"></div>
<div style="left:400px;top:165px;width:80px;height:41px;background:#424242;border-radius:0 4px 0 0;"></div>
<div style="left:400px;top:178px;width:80px;height:1px;background:#393939;"></div>
<div style="left:400px;top:205px;width:80px;height:1px;background:#393939;"></div>
<div style="left:440px;top:179px;width:1px;height:26px;background:#393939;"></div>
<span class="t" style="left:428.40px;top:186px;font-size:12px;color:#b4b4b4;letter-spacing:0.856px;">ct</span>
<svg style="left:440px;top:165px;" width="40" height="135" viewBox="440 165 40 135"><path d="M452.200 170.100L449.200 172.600 452.200 175.100zM456.300 170.100L453.300 172.600 456.300 175.100z" fill="#c6c6c6" stroke="#c6c6c6" stroke-width=".3"/><path d="M468.400 170.600l5.200 5M473.600 170.600l-5.200 5" stroke="#b8b8b8" stroke-width="1.900"/><path d="M463 189.500h10M463 191.500h10M463 193.500h10M463 195.500h10" stroke="#c6c6c6" stroke-width="1"/><path d="M466.400 211.900L469.800 213.400 466.600 218.200 469 218.600 463 226 464.200 219.600 460.200 220.400z" fill="#c6c6c6"/><path d="M454.200 236.200l10.800 10.800" stroke="#c6c6c6" stroke-width="1.200"/><path d="M462.400 236l2.800 2.800-7.400 7.600-3.800 1 .9-3.900z" fill="#c6c6c6"/></svg>
<div style="left:400px;top:231px;width:78px;height:1px;background:#5a5a5a;"></div>
<div style="left:400px;top:253px;width:78px;height:21px;background:#4b6a8c;"></div>
<div style="left:400px;top:296px;width:78px;height:1px;background:#5a5a5a;"></div>
<svg style="left:453px;top:257px;" width="13" height="13" viewBox="0 0 13 13"><rect x="1" y="1" width="11" height="11" fill="#e4e4e4"/><path d="M4.200 2.400h4.600q.3 1.500 1.800 1.800v4.600q-1.500.3-1.800 1.800h-4.600q-.3-1.500-1.800-1.800v-4.600q1.500-.3 1.800-1.800z" fill="#4b6a8c"/></svg>
<svg style="left:453px;top:279px;" width="13" height="13" viewBox="0 0 13 13"><rect x="1" y="1" width="11" height="11" fill="#dcdcdc"/><path d="M4.200 2.400h4.600q.3 1.500 1.800 1.800v4.600q-1.500.3-1.800 1.800h-4.600q-.3-1.500-1.800-1.800v-4.600q1.500-.3 1.800-1.800z" fill="#535353"/></svg>
<span class="t" style="left:456.20px;top:282px;font-size:8px;color:#f0f0f0;font-weight:700;font-family:'Liberation Serif',serif;">T</span>
<div style="left:478px;top:168px;width:2px;height:247px;background:#3d3d3d;"></div>
<div style="left:173px;top:790px;width:248px;height:40px;background:#4a4a4a;"></div>
<div style="left:173px;top:822px;width:248px;height:1px;background:#3d3d3d;"></div>
<div style="left:420px;top:790px;width:1px;height:40px;background:#3d3d3d;"></div>
<svg style="left:184px;top:807px;" width="6" height="9" viewBox="0 0 6 9"><path d="M1 1l3.500 3.500-3.500 3.500" fill="none" stroke="#a4a4a4" stroke-width="1.200"/></svg>
<div style="left:200px;top:804px;width:11px;height:15px;background:#ececec;"></div>
<span class="t" style="left:220.40px;top:804.5px;font-size:11px;color:#f2f2f2;letter-spacing:-0.251px;">stock-p...039.jpg (4)</span>
<span class="t" style="left:220.40px;top:827px;font-size:11px;color:#f2f2f2;letter-spacing:-0.236px;">stock-photo...2.jpg (2)</span>
<!-- s_menus -->
<div style="left:74px;top:24px;width:354px;height:780px;background:#f2f2f2;box-shadow:2.500px 4px 3px -1px rgba(0,0,0,.45);border:1px solid #dcdcdc;box-sizing:border-box;"></div>
<span class="t" style="left:108.90px;top:31px;font-size:12px;color:#000;letter-spacing:-0.019px;">Undo Update Link</span>
<span class="t" style="left:372.90px;top:31px;font-size:12px;color:#000;letter-spacing:0.320px;">Ctrl+Z</span>
<span class="t" style="left:108.90px;top:53px;font-size:12px;color:#6d6d6d;letter-spacing:-0.329px;">Redo</span>
<span class="t" style="left:340.80px;top:53px;font-size:12px;color:#6d6d6d;letter-spacing:0.243px;">Ctrl+Shift+Z</span>
<div style="left:105px;top:74px;width:320px;height:1px;background:#d7d7d7;"></div>
<span class="t" style="left:108.90px;top:82px;font-size:12px;color:#6d6d6d;letter-spacing:0.456px;">Cut</span>
<span class="t" style="left:372.90px;top:82px;font-size:12px;color:#6d6d6d;letter-spacing:0.182px;">Ctrl+X</span>
<span class="t" style="left:108.90px;top:104px;font-size:12px;color:#6d6d6d;letter-spacing:0.228px;">Copy</span>
<span class="t" style="left:371.60px;top:104px;font-size:12px;color:#6d6d6d;letter-spacing:0.311px;">Ctrl+C</span>
<span class="t" style="left:108.90px;top:126px;font-size:12px;color:#000;letter-spacing:-0.372px;">Paste</span>
<span class="t" style="left:372.90px;top:126px;font-size:12px;color:#000;letter-spacing:0.182px;">Ctrl+V</span>
<span class="t" style="left:108.90px;top:148px;font-size:12px;color:#6d6d6d;letter-spacing:0.064px;">Paste without Formatting</span>
<span class="t" style="left:340.80px;top:148px;font-size:12px;color:#6d6d6d;letter-spacing:0.182px;">Ctrl+Shift+V</span>
<span class="t" style="left:108.90px;top:170px;font-size:12px;color:#6d6d6d;letter-spacing:-0.216px;">Paste Into</span>
<span class="t" style="left:349.60px;top:170px;font-size:12px;color:#6d6d6d;letter-spacing:0.357px;">Ctrl+Alt+V</span>
<span class="t" style="left:108.90px;top:192px;font-size:12px;color:#000;letter-spacing:-0.317px;">Paste in Place</span>
<span class="t" style="left:317.70px;top:192px;font-size:12px;color:#000;letter-spacing:0.272px;">Ctrl+Alt+Shift+V</span>
<span class="t" style="left:108.90px;top:214px;font-size:12px;color:#6d6d6d;letter-spacing:-0.172px;">Clear</span>
<span class="t" style="left:351.90px;top:214px;font-size:12px;color:#6d6d6d;letter-spacing:-0.388px;">Backspace</span>
<div style="left:105px;top:235px;width:320px;height:1px;background:#d7d7d7;"></div>
<span class="t" style="left:108.90px;top:243px;font-size:12px;color:#6d6d6d;letter-spacing:0.109px;">Duplicate</span>
<span class="t" style="left:316.90px;top:243px;font-size:12px;color:#6d6d6d;letter-spacing:0.282px;">Ctrl+Alt+Shift+D</span>
<span class="t" style="left:108.90px;top:265px;font-size:12px;color:#6d6d6d;letter-spacing:-0.358px;">Step and Repeat...</span>
<span class="t" style="left:348.90px;top:265px;font-size:12px;color:#6d6d6d;letter-spacing:0.360px;">Ctrl+Alt+U</span>
<span class="t" style="left:108.90px;top:287px;font-size:12px;color:#6d6d6d;letter-spacing:-0.149px;">Place and Link</span>
<div style="left:105px;top:308px;width:320px;height:1px;background:#d7d7d7;"></div>
<span class="t" style="left:108.90px;top:316px;font-size:12px;color:#000;letter-spacing:-0.107px;">Select All</span>
<span class="t" style="left:371.90px;top:316px;font-size:12px;color:#000;letter-spacing:0.382px;">Ctrl+A</span>
<span class="t" style="left:108.90px;top:338px;font-size:12px;color:#6d6d6d;letter-spacing:-0.109px;">Deselect All</span>
<span class="t" style="left:339.90px;top:338px;font-size:12px;color:#6d6d6d;letter-spacing:0.263px;">Ctrl+Shift+A</span>
<div style="left:105px;top:359px;width:320px;height:1px;background:#d7d7d7;"></div>
<div style="left:77px;top:363px;width:348px;height:22px;background:#91c9f7;"></div>
<span class="t" style="left:108.90px;top:367px;font-size:12px;color:#000;letter-spacing:0.114px;">InCopy</span>
<svg style="left:410.5px;top:369px;" width="7" height="10" viewBox="0 0 7 10"><path d="M1.500 1.500 L4.900 5 L1.500 8.500" fill="none" stroke="#3c3c3c" stroke-width="1.150"/></svg>
<div style="left:105px;top:388px;width:320px;height:1px;background:#d7d7d7;"></div>
<span class="t" style="left:108.90px;top:396px;font-size:12px;color:#6d6d6d;letter-spacing:0.002px;">Edit Original</span>
<span class="t" style="left:108.90px;top:418px;font-size:12px;color:#000;letter-spacing:0.023px;">Edit With</span>
<svg style="left:410.5px;top:420px;" width="7" height="10" viewBox="0 0 7 10"><path d="M1.500 1.500 L4.900 5 L1.500 8.500" fill="none" stroke="#3c3c3c" stroke-width="1.150"/></svg>
<span class="t" style="left:108.90px;top:440px;font-size:12px;color:#6d6d6d;letter-spacing:-0.232px;">Go To Source</span>
<span class="t" style="left:108.90px;top:462px;font-size:12px;color:#6d6d6d;letter-spacing:-0.088px;">Edit in Story Editor</span>
<span class="t" style="left:372.90px;top:462px;font-size:12px;color:#6d6d6d;letter-spacing:0.182px;">Ctrl+Y</span>
<div style="left:105px;top:483px;width:320px;height:1px;background:#d7d7d7;"></div>
<span class="t" style="left:108.90px;top:491px;font-size:12px;color:#000;letter-spacing:0.140px;">Quick Apply...</span>
<span class="t" style="left:352.90px;top:491px;font-size:12px;color:#000;letter-spacing:0.027px;">Ctrl+Enter</span>
<span class="t" style="left:108.90px;top:513px;font-size:12px;color:#000;letter-spacing:-0.017px;">Find/Change...</span>
<span class="t" style="left:373.90px;top:513px;font-size:12px;color:#000;letter-spacing:0.120px;">Ctrl+F</span>
<span class="t" style="left:108.90px;top:535px;font-size:12px;color:#6d6d6d;letter-spacing:-0.120px;">Find Next</span>
<span class="t" style="left:350.90px;top:535px;font-size:12px;color:#6d6d6d;letter-spacing:0.287px;">Ctrl+Alt+F</span>
<span class="t" style="left:108.90px;top:557px;font-size:12px;color:#000;letter-spacing:-0.058px;">Spelling</span>
<svg style="left:410.5px;top:559px;" width="7" height="10" viewBox="0 0 7 10"><path d="M1.500 1.500 L4.900 5 L1.500 8.500" fill="none" stroke="#3c3c3c" stroke-width="1.150"/></svg>
<div style="left:105px;top:578px;width:320px;height:1px;background:#d7d7d7;"></div>
<span class="t" style="left:108.90px;top:586px;font-size:12px;color:#000;letter-spacing:-0.288px;">Transparency Blend Space</span>
<svg style="left:410.5px;top:588px;" width="7" height="10" viewBox="0 0 7 10"><path d="M1.500 1.500 L4.900 5 L1.500 8.500" fill="none" stroke="#3c3c3c" stroke-width="1.150"/></svg>
<span class="t" style="left:108.90px;top:608px;font-size:12px;color:#000;letter-spacing:-0.286px;">Transparency Flattener Presets...</span>
<div style="left:105px;top:629px;width:320px;height:1px;background:#d7d7d7;"></div>
<span class="t" style="left:108.90px;top:637px;font-size:12px;color:#000;letter-spacing:-0.082px;">Migrate previous Local Settings...</span>
<div style="left:105px;top:658px;width:320px;height:1px;background:#d7d7d7;"></div>
<span class="t" style="left:108.90px;top:666px;font-size:12px;color:#000;letter-spacing:-0.123px;">Color Settings...</span>
<span class="t" style="left:108.90px;top:688px;font-size:12px;color:#000;letter-spacing:-0.175px;">Assign Profiles...</span>
<span class="t" style="left:108.90px;top:710px;font-size:12px;color:#000;letter-spacing:-0.016px;">Convert to Profile...</span>
<div style="left:105px;top:731px;width:320px;height:1px;background:#d7d7d7;"></div>
<span class="t" style="left:108.90px;top:739px;font-size:12px;color:#000;letter-spacing:-0.145px;">Keyboard Shortcuts...</span>
<span class="t" style="left:108.90px;top:761px;font-size:12px;color:#000;letter-spacing:-0.119px;">Menus...</span>
<span class="t" style="left:108.90px;top:783px;font-size:12px;color:#000;letter-spacing:-0.300px;">Preferences</span>
<svg style="left:410.5px;top:785px;" width="7" height="10" viewBox="0 0 7 10"><path d="M1.500 1.500 L4.900 5 L1.500 8.500" fill="none" stroke="#3c3c3c" stroke-width="1.150"/></svg>
<div style="left:422px;top:360px;width:352px;height:276px;background:#f2f2f2;box-shadow:2.500px 4px 3px -1px rgba(0,0,0,.45);border:1px solid #dcdcdc;box-sizing:border-box;"></div>
<span class="t" style="left:456.80px;top:367px;font-size:12px;color:#000;letter-spacing:0.036px;">Add Selection to Assignment</span>
<svg style="left:757.2px;top:369px;" width="7" height="10" viewBox="0 0 7 10"><path d="M1.500 1.500 L4.900 5 L1.500 8.500" fill="none" stroke="#3c3c3c" stroke-width="1.150"/></svg>
<span class="t" style="left:456.80px;top:389px;font-size:12px;color:#000;letter-spacing:0.022px;">Add Layer to Assignment</span>
<svg style="left:757.2px;top:391px;" width="7" height="10" viewBox="0 0 7 10"><path d="M1.500 1.500 L4.900 5 L1.500 8.500" fill="none" stroke="#3c3c3c" stroke-width="1.150"/></svg>
<span class="t" style="left:456.80px;top:411px;font-size:12px;color:#000;letter-spacing:0.038px;">Add All Stories to Assignment</span>
<svg style="left:757.2px;top:413px;" width="7" height="10" viewBox="0 0 7 10"><path d="M1.500 1.500 L4.900 5 L1.500 8.500" fill="none" stroke="#3c3c3c" stroke-width="1.150"/></svg>
<span class="t" style="left:456.80px;top:433px;font-size:12px;color:#000;letter-spacing:0.041px;">Add All Graphics to Assignment</span>
<svg style="left:757.2px;top:435px;" width="7" height="10" viewBox="0 0 7 10"><path d="M1.500 1.500 L4.900 5 L1.500 8.500" fill="none" stroke="#3c3c3c" stroke-width="1.150"/></svg>
<div style="left:453px;top:454px;width:318px;height:1px;background:#d7d7d7;"></div>
<span class="t" style="left:456.80px;top:462px;font-size:12px;color:#000;letter-spacing:-0.177px;">Export</span>
<svg style="left:757.2px;top:464px;" width="7" height="10" viewBox="0 0 7 10"><path d="M1.500 1.500 L4.900 5 L1.500 8.500" fill="none" stroke="#3c3c3c" stroke-width="1.150"/></svg>
<div style="left:453px;top:483px;width:318px;height:1px;background:#d7d7d7;"></div>
<span class="t" style="left:456.80px;top:491px;font-size:12px;color:#6d6d6d;letter-spacing:-0.211px;">Save Content</span>
<div style="left:453px;top:512px;width:318px;height:1px;background:#d7d7d7;"></div>
<span class="t" style="left:456.80px;top:520px;font-size:12px;color:#6d6d6d;letter-spacing:0.012px;">Check Out</span>
<span class="t" style="left:714.10px;top:520px;font-size:12px;color:#6d6d6d;letter-spacing:-0.065px;">Ctrl+F9</span>
<span class="t" style="left:456.80px;top:542px;font-size:12px;color:#6d6d6d;letter-spacing:-0.123px;">Check In</span>
<span class="t" style="left:681.70px;top:542px;font-size:12px;color:#6d6d6d;letter-spacing:0.083px;">Ctrl+Shift+F9</span>
<span class="t" style="left:456.80px;top:564px;font-size:12px;color:#6d6d6d;letter-spacing:0.020px;">Check In All</span>
<span class="t" style="left:658.60px;top:564px;font-size:12px;color:#6d6d6d;letter-spacing:0.193px;">Ctrl+Alt+Shift+F9</span>
<span class="t" style="left:456.80px;top:586px;font-size:12px;color:#6d6d6d;letter-spacing:-0.099px;">Cancel Check Out</span>
<div style="left:453px;top:607px;width:318px;height:1px;background:#d7d7d7;"></div>
<span class="t" style="left:456.80px;top:615px;font-size:12px;color:#6d6d6d;letter-spacing:0.057px;">Update Content</span>
<span class="t" style="left:714.10px;top:615px;font-size:12px;color:#6d6d6d;letter-spacing:-0.065px;">Ctrl+F5</span>
</div></body></html>
